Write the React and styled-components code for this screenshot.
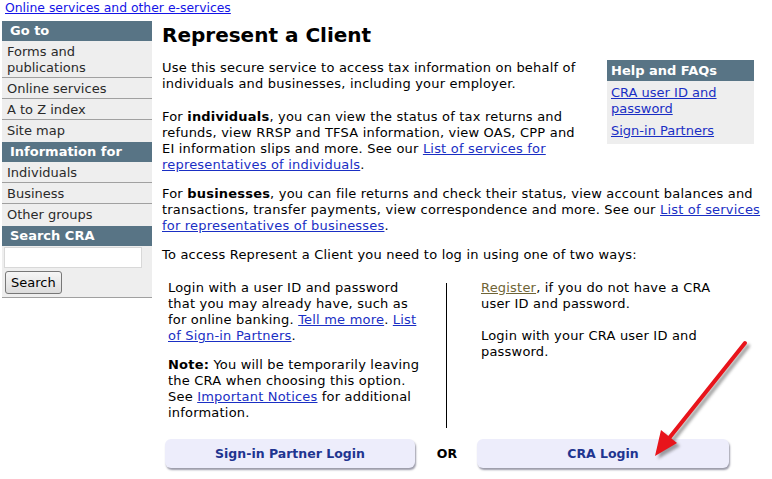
import React from "react";
import styled, { createGlobalStyle } from "styled-components";

const Global = createGlobalStyle`
  html, body { margin: 0; padding: 0; background: #fff; }
  body { font-family: "DejaVu Sans", Verdana, sans-serif; font-size: 13px; line-height: 16px; color: #000; }
  a { color: #1a2fc4; }
`;

const Page = styled.div`
  position: relative;
  width: 772px;
  height: 479px;
  overflow: hidden;
`;

const TopLink = styled.a`
  display: block;
  padding: 0 0 0 5px;
  height: 16px;
  font-size: 12.4px;
  line-height: 15px;
  color: #1414e6;
`;

const Layout = styled.div`
  display: flex;
  align-items: flex-start;
  padding: 5px 0 0 2px;
  gap: 10px;
`;

const Sidebar = styled.nav`
  width: 150px;
  flex: none;
  display: flex;
  flex-direction: column;
  background: #eeeeee;
  border-bottom: 1px solid #a0a0a0;
  padding-bottom: 3px;
`;

const SideHead = styled.div`
  background: #587485;
  color: #fff;
  font-weight: bold;
  height: 20px;
  line-height: 20px;
  padding-left: 8px;
  margin-top: ${(p) => (p.$first ? "0" : "2px")};
`;

const SideItem = styled.div`
  padding: 3px 5px 1px 5px;
  color: #2a2a2a;
  border-bottom: ${(p) => (p.$last ? "none" : "1px solid #a0a0a0")};
`;

const SearchBox = styled.div`
  display: flex;
  flex-direction: column;
  align-items: flex-start;
  gap: 3px;
  padding: 1px 0 0 2px;
`;

const SearchInput = styled.input`
  width: 138px;
  height: 21px;
  box-sizing: border-box;
  border: 1px solid #d8d8d8;
  background: #fff;
  margin: 0;
`;

const SearchButton = styled.button`
  font-family: "DejaVu Sans", Verdana, sans-serif;
  font-size: 13px;
  height: 23px;
  padding: 0 5px;
  margin-left: 1px;
  border: 1px solid #777;
  border-radius: 3px;
  background: linear-gradient(#f6f6f6, #dcdcdc);
  color: #000;
`;

const Main = styled.main`
  flex: 1;
  padding-right: 8px;
  letter-spacing: 0.2px;
`;

const Title = styled.h1`
  font-size: 20px;
  line-height: 24px;
  font-weight: bold;
  letter-spacing: 0;
  margin: 2px 0 13px 0;
`;

const HelpBox = styled.aside`
  float: right;
  width: 147px;
  margin: 0 10px 6px 20px;
  background: #eeeeee;
  padding-bottom: 3px;
  letter-spacing: 0;
`;

const HelpHead = styled.div`
  background: #587485;
  color: #fff;
  font-weight: bold;
  height: 21px;
  line-height: 21px;
  padding-left: 4px;
`;

const HelpLink = styled.a`
  display: block;
  padding: 4px 4px 2px 4px;
`;

const P = styled.p`
  margin: 0 0 ${(p) => (p.$mb === undefined ? 13 : p.$mb)}px 0;
`;

const LoginGrid = styled.div`
  display: grid;
  grid-template-columns: 260px 58px 252px;
  clear: both;
`;

const LeftText = styled.div`
  padding: 4px 0 0 6px;
`;

const RightText = styled.div`
  padding: 4px 0 0 1px;
`;

const DividerCell = styled.div`
  display: flex;
  justify-content: flex-start;
  padding: 7px 0 0 24px;
`;

const DividerLine = styled.div`
  width: 1px;
  background: #000;
  height: 145px;
`;

const BtnCell = styled.div`
  padding: 11px 0 0 ${(p) => (p.$left ? 3 : 0)}px;
  margin-left: ${(p) => (p.$right ? -3 : 0)}px;
`;

const LoginButton = styled.button`
  width: ${(p) => p.$w}px;
  height: 29px;
  border: none;
  border-radius: 6px;
  background: #ededfb;
  box-shadow: 1px 2px 2px #9a9aa8;
  font-family: "DejaVu Sans", Verdana, sans-serif;
  font-size: 12.5px;
  font-weight: bold;
  letter-spacing: 0;
  color: #1f3590;
  padding: 0;
`;

const Or = styled.div`
  padding-top: 18px;
  text-align: center;
  font-weight: bold;
  font-size: 12.5px;
  letter-spacing: 0;
  margin-left: -8px;
`;

const Visited = styled.a`
  color: #6f6436;
`;

const ArrowSvg = styled.svg`
  position: absolute;
  left: 640px;
  top: 330px;
  pointer-events: none;
`;

export default function App() {
  return (
    <Page>
      <Global />
      <TopLink href="#">Online services and other e-services</TopLink>
      <Layout>
        <Sidebar>
          <SideHead $first>Go to</SideHead>
          <SideItem>Forms and publications</SideItem>
          <SideItem>Online services</SideItem>
          <SideItem>A to Z index</SideItem>
          <SideItem $last>Site map</SideItem>
          <SideHead>Information for</SideHead>
          <SideItem>Individuals</SideItem>
          <SideItem>Business</SideItem>
          <SideItem $last>Other groups</SideItem>
          <SideHead>Search CRA</SideHead>
          <SearchBox>
            <SearchInput type="text" />
            <SearchButton>Search</SearchButton>
          </SearchBox>
        </Sidebar>
        <Main>
          <Title>Represent a Client</Title>
          <HelpBox>
            <HelpHead>Help and FAQs</HelpHead>
            <HelpLink href="#">CRA user ID and password</HelpLink>
            <HelpLink href="#">Sign-in Partners</HelpLink>
          </HelpBox>
          <P $mb={17}>
            Use this secure service to access tax information on behalf of
            individuals and businesses, including your employer.
          </P>
          <P>
            For <b>individuals</b>, you can view the status of tax returns and
            refunds, view RRSP and TFSA information, view OAS, CPP and EI
            information slips and more. See our{" "}
            <a href="#">List of services for representatives of individuals</a>.
          </P>
          <P>
            For <b>businesses</b>, you can file returns and check their status,
            view account balances and transactions, transfer payments, view
            correspondence and more. See our{" "}
            <a href="#">List of services for representatives of businesses</a>.
          </P>
          <P $mb={13}>
            To access Represent a Client you need to log in using one of two
            ways:
          </P>
          <LoginGrid>
            <LeftText>
              <P>
                Login with a user ID and password that you may already have,
                such as for online banking. <a href="#">Tell me more</a>.{" "}
                <a href="#">List of Sign-in Partners</a>.
              </P>
              <P $mb={0}>
                <b>Note:</b> You will be temporarily leaving the CRA when
                choosing this option. See <a href="#">Important Notices</a> for
                additional information.
              </P>
            </LeftText>
            <DividerCell>
              <DividerLine />
            </DividerCell>
            <RightText>
              <P $mb={16}>
                <Visited href="#">Register</Visited>, if you do not have a CRA
                user ID and password.
              </P>
              <P $mb={0}>Login with your CRA user ID and password.</P>
            </RightText>
            <BtnCell $left>
              <LoginButton $w={250}>Sign-in Partner Login</LoginButton>
            </BtnCell>
            <Or>OR</Or>
            <BtnCell $right>
              <LoginButton $w={252}>CRA Login</LoginButton>
            </BtnCell>
          </LoginGrid>
        </Main>
      </Layout>
      <ArrowSvg width="120" height="140" viewBox="0 0 120 140">
        <defs>
          <filter id="sh" x="-20%" y="-20%" width="140%" height="140%">
            <feGaussianBlur stdDeviation="1.5" />
          </filter>
        </defs>
        <g transform="translate(3,3)" filter="url(#sh)" opacity="0.55">
          <line x1="105" y1="13" x2="26" y2="112" stroke="#555" strokeWidth="4" strokeLinecap="round" />
          <polygon points="15,126 21,100 37,113" fill="#555" />
        </g>
        <line x1="105" y1="13" x2="26" y2="112" stroke="#e8141b" strokeWidth="4" strokeLinecap="round" />
        <polygon points="15,126 21,100 37,113" fill="#e8141b" />
      </ArrowSvg>
    </Page>
  );
}
